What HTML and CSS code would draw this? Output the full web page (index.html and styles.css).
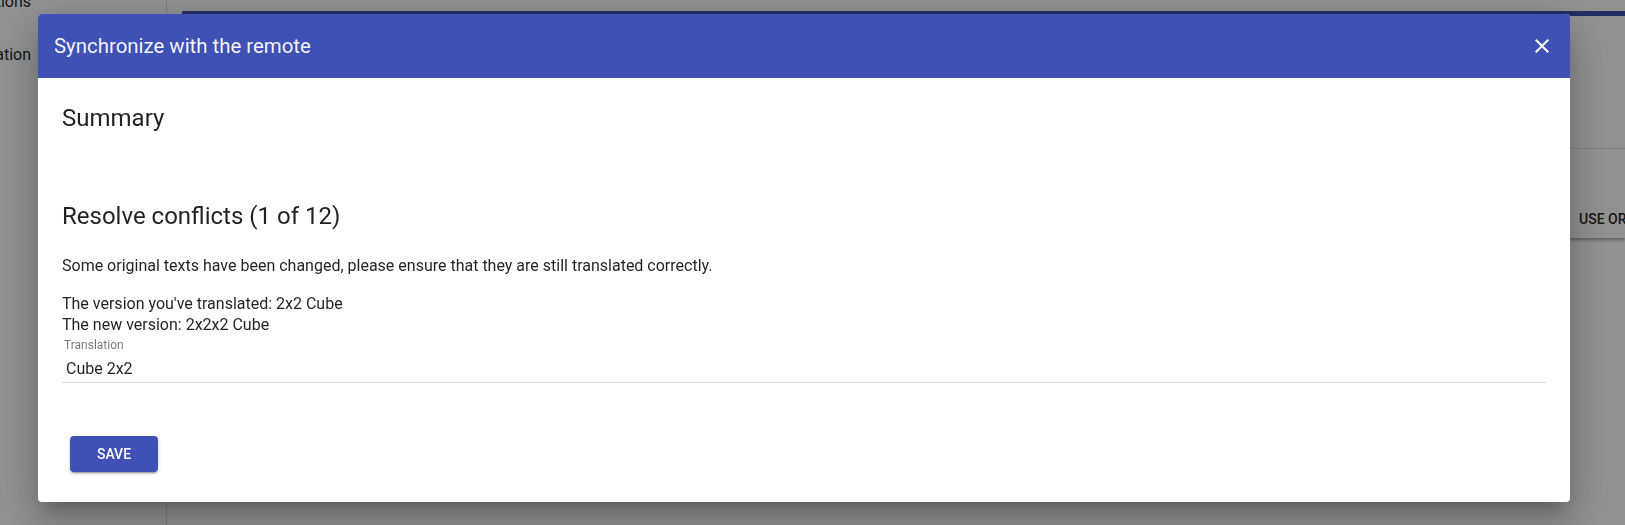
FILE: index.html
```html
<!DOCTYPE html>
<html lang="en">
<head>
<meta charset="utf-8">
<title>Synchronize with the remote</title>
<link rel="stylesheet" href="styles.css">
</head>
<body>
<div class="app">
  <aside class="sidenav">
    <div class="nav-list">
      <div class="nav-item"><span>Translations</span></div>
      <div class="nav-item"><span>Synchronization</span></div>
    </div>
  </aside>
  <main class="main">
    <div class="progress"></div>
    <section class="panel">
      <div class="panel-head"></div>
      <div class="panel-row">
        <span class="grow"></span>
        <span class="flat-btn">USE ORIGINAL</span>
      </div>
    </section>
  </main>
</div>

<div class="backdrop"></div>

<div class="dialog" role="dialog">
  <header class="dialog-head">
    <span class="dialog-title">Synchronize with the remote</span>
    <span class="close-btn" aria-label="Close">
      <svg viewBox="0 0 24 24" width="24" height="24"><path fill="currentColor" d="M19 6.41L17.59 5 12 10.59 6.41 5 5 6.41 10.59 12 5 17.59 6.41 19 12 13.41 17.59 19 19 17.59 13.41 12z"/></svg>
    </span>
  </header>
  <div class="dialog-body">
    <h2 class="headline summary">Summary</h2>
    <h2 class="headline">Resolve conflicts (1 of 12)</h2>
    <p class="intro">Some original texts have been changed, please ensure that they are still translated correctly.</p>
    <div class="versions">
      <div>The version you've translated: 2x2 Cube</div>
      <div>The new version: 2x2x2 Cube</div>
    </div>
    <div class="field">
      <label class="field-label">Translation</label>
      <div class="field-input">Cube 2x2</div>
    </div>
    <div class="actions">
      <button class="save-btn">SAVE</button>
    </div>
  </div>
</div>
</body>
</html>
```

FILE: styles.css
```css
html, body {
  margin: 0;
  padding: 0;
  height: 100%;
  overflow: hidden;
}

body {
  font-family: Roboto, "Liberation Sans", Arial, sans-serif;
  background: #ffffff;
  color: rgba(0, 0, 0, 0.87);
}

.app {
  display: flex;
  height: 100%;
}

.sidenav {
  width: 166px;
  flex: none;
  border-right: 1px solid rgba(0, 0, 0, 0.14);
  overflow: hidden;
}

.nav-list {
  margin-top: -25px;
}

.nav-item {
  width: 31px;
  height: 53px;
  line-height: 53px;
  font-size: 16px;
  display: flex;
  justify-content: flex-end;
  overflow: hidden;
  white-space: nowrap;
}

.main {
  flex: 1;
  min-width: 0;
  padding: 11px 0 0 15px;
  overflow: hidden;
}

.progress {
  height: 5px;
  background: #3f51b5;
}

.panel {
  background: #fff;
  box-shadow: 0 2px 3px rgba(0, 0, 0, 0.35);
}

.panel-head {
  height: 132px;
  border-bottom: 1px solid rgba(0, 0, 0, 0.12);
}

.panel-row {
  height: 89px;
  display: flex;
  align-items: flex-end;
  padding-bottom: 9px;
  box-sizing: border-box;
}

.grow {
  width: 1397px;
  flex: none;
}

.flat-btn {
  flex: none;
  font-size: 14px;
  line-height: 20px;
  font-weight: 500;
  white-space: nowrap;
  color: rgba(0, 0, 0, 0.87);
}

.backdrop {
  position: fixed;
  inset: 0;
  background: rgba(0, 0, 0, 0.43);
}

.dialog {
  position: fixed;
  left: 38px;
  top: 14px;
  width: 1532px;
  background: #fff;
  border-radius: 4px;
  overflow: hidden;
  box-shadow: 0 11px 15px -7px rgba(0, 0, 0, 0.2),
              0 24px 38px 3px rgba(0, 0, 0, 0.14),
              0 9px 46px 8px rgba(0, 0, 0, 0.12);
}

.dialog-head {
  height: 64px;
  background: #3f51b5;
  color: #fff;
  display: flex;
  align-items: center;
  justify-content: space-between;
  padding: 0 16px;
}

.dialog-title {
  font-size: 20.4px;
  font-weight: 400;
  color: rgba(255, 255, 255, 0.95);
}

.close-btn {
  width: 24px;
  height: 24px;
  display: flex;
  color: #fff;
}

.dialog-body {
  padding: 24px 24px 30px 24px;
}

.headline {
  margin: 0;
  font-size: 24px;
  line-height: 32px;
  font-weight: 400;
}

.summary {
  margin-bottom: 66px;
}

.intro {
  margin: 23px 0 0 0;
  font-size: 16px;
  line-height: 21px;
}

.versions {
  margin-top: 17px;
  font-size: 16px;
  line-height: 21px;
}

.field {
  margin-top: 3px;
  padding: 0 2px 0 0;
  border-bottom: 1px solid #dedede;
}

.field-label {
  display: block;
  font-size: 12px;
  line-height: 14px;
  color: rgba(0, 0, 0, 0.54);
  padding-left: 2px;
}

.field-input {
  margin-top: 7px;
  padding: 0 0 3px 4px;
  font-size: 16px;
  line-height: 20px;
}

.actions {
  margin-top: 53px;
  padding-left: 8px;
  display: flex;
}

.save-btn {
  width: 88px;
  height: 36px;
  border: none;
  border-radius: 4px;
  background: #3f51b5;
  color: #fff;
  font-family: Roboto, "Liberation Sans", Arial, sans-serif;
  font-size: 14px;
  font-weight: 500;
  padding: 0 16px;
  box-shadow: 0 3px 1px -2px rgba(0, 0, 0, 0.2),
              0 2px 2px 0 rgba(0, 0, 0, 0.14),
              0 1px 5px 0 rgba(0, 0, 0, 0.12);
}
```
